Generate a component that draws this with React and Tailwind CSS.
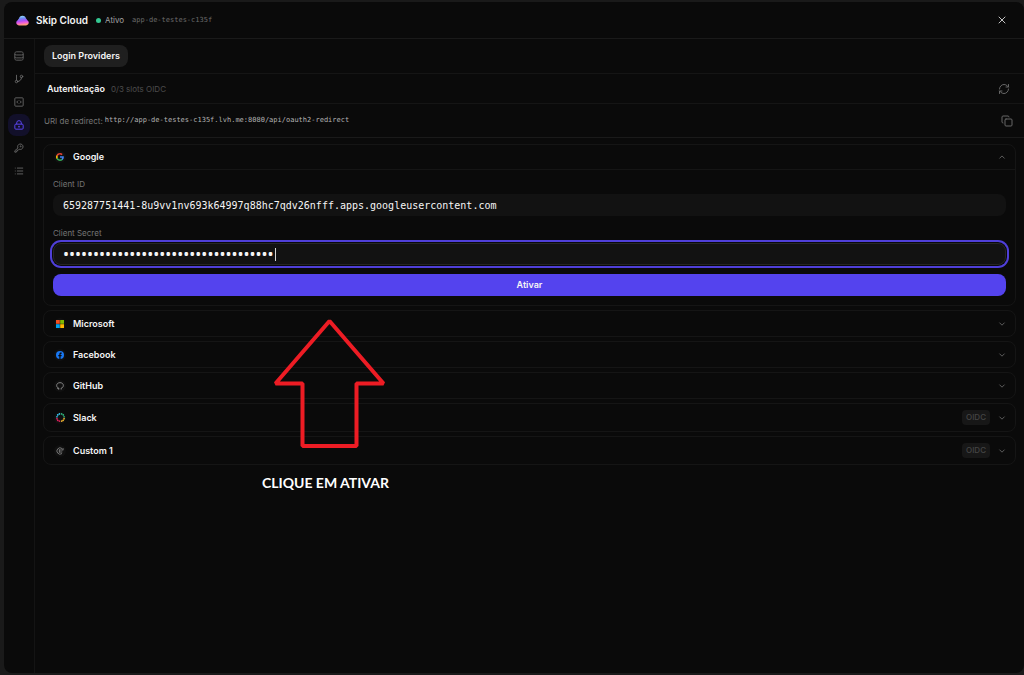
import { GitBranch, List, RefreshCw, X, Copy } from 'lucide-react'

const REDIRECT_URI = 'http://app-de-testes-c135f.lvh.me:8080/api/oauth2-redirect'
const CLIENT_ID = '659287751441-8u9vv1nv693k64997q88hc7qdv26nfff.apps.googleusercontent.com'

function CloudLogo() {
  return (
    <svg viewBox="0 0 24 20" className="h-[11px] w-[13px]" aria-hidden="true">
      <defs>
        <linearGradient id="cloud" x1="0" y1="0" x2="0.15" y2="1">
          <stop offset="0" stopColor="#9af0f5" />
          <stop offset="0.35" stopColor="#6f8cf5" />
          <stop offset="0.6" stopColor="#b04df5" />
          <stop offset="0.8" stopColor="#f25fd8" />
          <stop offset="1" stopColor="#ff9a7a" />
        </linearGradient>
      </defs>
      <path
        d="M12 1c3.600 0 6 2.200 6.500 5.500 1.200.6 1.800 1.600 2 3 1.900.6 3 2.300 3 4.300 0 3-2.100 5.200-4.900 5.200H5.400C2.600 19 .5 16.800.5 13.800c0-2 1.100-3.700 3-4.300.2-1.400.8-2.400 2-3C6 3.200 8.400 1 12 1z"
        fill="url(#cloud)"
      />
    </svg>
  )
}

function DatabaseIcon(props) {
  return (
    <svg viewBox="0 0 24 24" fill="none" stroke="currentColor" strokeWidth="2" aria-hidden="true" {...props}>
      <path d="M2 6c0-2.500 1.500-4 4-4h12c2.500 0 4 1.500 4 4v12c0 2.500-1.500 4-4 4H6c-2.500 0-4-1.500-4-4z" />
      <path d="M2 7c0 1.500 1.500 2.500 4 2.500h12c2.500 0 4-1 4-2.500M2 14c0 1.500 1.500 2.500 4 2.500h12c2.500 0 4-1 4-2.500" />
    </svg>
  )
}

function CodeIcon(props) {
  return (
    <svg viewBox="0 0 24 24" fill="none" stroke="currentColor" strokeWidth="2" aria-hidden="true" {...props}>
      <rect x="2" y="2" width="20" height="20" rx="2" />
      <path d="M10 8.500L6.500 12l3.500 3.500M14 8.500l3.500 3.500-3.500 3.500" />
    </svg>
  )
}

function LockIcon(props) {
  return (
    <svg viewBox="0 0 24 24" fill="none" stroke="currentColor" strokeWidth="2.400" aria-hidden="true" {...props}>
      <rect x="2" y="10" width="20" height="12" rx="2.500" />
      <path d="M6.500 10V7a5.500 5.500 0 0 1 11 0v3" />
      <circle cx="12" cy="16" r="2" fill="currentColor" stroke="none" />
    </svg>
  )
}

function KeyIcon(props) {
  return (
    <svg
      viewBox="0 0 24 24"
      fill="none"
      stroke="currentColor"
      strokeWidth="2"
      strokeLinejoin="round"
      aria-hidden="true"
      {...props}
    >
      <path d="M9.500 12A6.500 6.500 0 1 1 12.500 14.800L10.500 17H8v2.500H5.500V22H2v-3.500z" />
      <circle cx="16" cy="8" r="1.200" />
    </svg>
  )
}

function Chevron({ up }) {
  return (
    <svg
      viewBox="0 0 8 8"
      className="size-2 text-[#5c5c5c]"
      fill="none"
      stroke="currentColor"
      strokeLinecap="round"
      aria-hidden="true"
    >
      <path d={up ? 'M1.700 5.200L4 2.900l2.300 2.300' : 'M1.700 2.900L4 5.200l2.300-2.300'} />
    </svg>
  )
}

function GoogleIcon() {
  return (
    <svg viewBox="0 0 24 24" className="size-2" aria-hidden="true">
      <path fill="#4285F4" d="M23.500 12.300c0-.8-.1-1.600-.2-2.300H12v4.500h6.500c-.3 1.500-1.100 2.700-2.400 3.600v3h3.900c2.200-2.100 3.500-5.100 3.500-8.800z" />
      <path fill="#34A853" d="M12 24c3.200 0 6-1.100 8-2.900l-3.900-3c-1.100.7-2.500 1.200-4.100 1.200-3.100 0-5.800-2.100-6.700-5H1.300v3.100C3.300 21.400 7.300 24 12 24z" />
      <path fill="#FBBC05" d="M5.300 14.300c-.2-.7-.4-1.500-.4-2.300s.1-1.600.4-2.300V6.600h-4C.5 8.200 0 10 0 12s.5 3.800 1.300 5.400z" />
      <path fill="#EA4335" d="M12 4.800c1.800 0 3.300.6 4.600 1.800L20 3.100C18 1.200 15.200 0 12 0 7.300 0 3.300 2.700 1.300 6.600l4 3.100c.9-2.800 3.600-4.900 6.700-4.900z" />
    </svg>
  )
}

function MicrosoftIcon() {
  return (
    <svg viewBox="0 0 8 8" className="size-2" aria-hidden="true">
      <path fill="#F25022" d="M0 0h3.800v3.800H0z" />
      <path fill="#7FBA00" d="M4.200 0H8v3.800H4.200z" />
      <path fill="#00A4EF" d="M0 4.200h3.800V8H0z" />
      <path fill="#FFB900" d="M4.200 4.200H8V8H4.200z" />
    </svg>
  )
}

function FacebookIcon() {
  return (
    <svg viewBox="0 0 24 24" className="size-2" aria-hidden="true">
      <circle cx="12" cy="12" r="12" fill="#1877F2" />
      <path fill="#0a0a0a" d="M10 24v-8.500H7V12h3V9.400C10 6.400 11.800 4.700 14.500 4.700c1.300 0 2.700.2 2.700.2v3h-1.500c-1.500 0-2 .9-2 1.900V12H17l-.5 3.500h-2.800V24z" />
    </svg>
  )
}

function GitHubIcon() {
  return (
    <svg viewBox="0 0 24 24" className="size-2" fill="none" stroke="#9a9a9a" strokeWidth="2.500" aria-hidden="true">
      <path d="M8.500 22.500v-4C4.500 17 2 15 2 10.500 2 5.500 6 2 12 2s10 3.500 10 8.500c0 4.500-2.500 6.500-6.500 8v4" />
      <path d="M8.500 20.500c-2.500.7-3.500-.5-5-2.500" />
    </svg>
  )
}

function SlackIcon() {
  return (
    <svg viewBox="0 0 24 24" className="size-[9px]" fill="none" strokeWidth="4.500" strokeLinecap="round" aria-hidden="true">
      <path stroke="#36C5F0" d="M9 2.500h.1M4.500 5h.1M2.500 10h.1" />
      <path stroke="#2EB67D" d="M15 2.500h.1M19.500 5h.1M21.500 10h.1" />
      <path stroke="#ECB22E" d="M21.500 15h.1M19 19.500h.1M15 21.500h.1" />
      <path stroke="#E01E5A" d="M9 21.500h.1M4.500 19.500h.1M2.500 15h.1" />
    </svg>
  )
}

function CustomIcon() {
  return (
    <svg viewBox="0 0 24 24" className="size-2" fill="none" stroke="#8a8a8a" strokeWidth="2.500" aria-hidden="true">
      <path d="M18 19.500a9.500 9.500 0 1 1 0-15M10 7v10M10 9h12M10 15h9M21 3v6" />
    </svg>
  )
}

const navItems = [
  { label: 'Banco de dados', icon: DatabaseIcon },
  { label: 'Branches', icon: GitBranch },
  { label: 'Funções', icon: CodeIcon },
  { label: 'Autenticação', icon: LockIcon, active: true },
  { label: 'Segredos', icon: KeyIcon },
  { label: 'Logs', icon: List },
]

const providers = [
  { name: 'Microsoft', icon: MicrosoftIcon },
  { name: 'Facebook', icon: FacebookIcon },
  { name: 'GitHub', icon: GitHubIcon },
  { name: 'Slack', icon: SlackIcon, oidc: true },
  { name: 'Custom 1', icon: CustomIcon, oidc: true },
]

function ProviderLabel({ icon: Icon, name }) {
  return (
    <span className="flex items-center gap-[7px]">
      <span className="flex size-3 items-center justify-center rounded-full bg-[#101010]">
        <Icon />
      </span>
      {name}
    </span>
  )
}

function ProviderRow({ provider }) {
  return (
    <button
      className={`flex w-full items-center justify-between rounded-lg border border-[#151515] pr-[9px] pl-[10px] text-left ${
        provider.oidc ? 'h-[29px]' : 'h-[27px]'
      }`}
    >
      <ProviderLabel icon={provider.icon} name={provider.name} />
      <span className="flex items-center gap-2">
        {provider.oidc && (
          <span className="rounded bg-[#171717] px-1 text-[8px] leading-[15px] font-medium text-[#454545]">OIDC</span>
        )}
        <Chevron />
      </span>
    </button>
  )
}

function Annotation() {
  return (
    <div className="pointer-events-none absolute top-[318px] left-[262px] flex flex-col items-center gap-[25px]">
      <svg width="112" height="130" viewBox="0 0 112 130" fill="none" className="ml-2" aria-hidden="true">
        <path d="M55.500 3L109.500 65.500H82.500V128H28.500V65.500H1.500Z" stroke="#ed1c24" strokeWidth="4" strokeLinejoin="bevel" />
      </svg>
      <span className="font-['Lato',sans-serif] text-[14px] leading-5 font-bold whitespace-nowrap text-white">
        CLIQUE EM ATIVAR
      </span>
    </div>
  )
}

export default function App() {
  return (
    <div className="relative flex min-h-screen flex-col bg-[#1a1a1a] pt-[2px] pb-[2px] pl-1 font-['Inter',sans-serif] text-[9px] text-[#f5f5f5]">
      <div className="flex flex-1 flex-col rounded-lg bg-[#0a0a0a]">
        <header className="flex h-[37px] items-center border-b border-[#1a1a1a] pr-4 pl-3">
          <CloudLogo />
          <h1 className="ml-[7px] text-[10px] font-semibold">Skip Cloud</h1>
          <span className="ml-2 size-[5px] rounded-full bg-[#34c892]" />
          <span className="ml-1 text-[8px] text-[#a3a3a3]">Ativo</span>
          <span className="ml-2 font-['DejaVu_Sans_Mono',monospace] text-[7px] text-[#6b6b6b]">app-de-testes-c135f</span>
          <button className="ml-auto text-[#c4c4c4]" aria-label="Fechar">
            <X className="size-3" />
          </button>
        </header>

        <div className="flex flex-1">
          <nav className="flex w-[31px] flex-col items-center gap-px border-r border-[#141414] pt-[6px]">
            {navItems.map(({ label, icon: Icon, active }) => (
              <button
                key={label}
                aria-label={label}
                className={`flex size-[22px] items-center justify-center rounded-lg ${
                  active ? 'bg-[#12102a] text-[#5b45ef]' : 'text-[#707070]'
                }`}
              >
                <Icon className="size-[10px]" />
              </button>
            ))}
          </nav>

          <main className="min-w-0 flex-1">
            <div className="flex h-[35px] items-center border-b border-[#151515] px-[9px]">
              <button className="h-[22px] rounded-lg bg-[#1f1f1f] px-2 font-semibold">Login Providers</button>
            </div>

            <div className="flex h-[30px] items-center border-b border-[#151515] pr-[14px] pl-3">
              <h2 className="font-semibold">Autenticação</h2>
              <span className="ml-[6px] text-[8px] text-[#4d4d4d]">0/3 slots OIDC</span>
              <button className="ml-auto text-[#666666]" aria-label="Atualizar">
                <RefreshCw className="size-3" />
              </button>
            </div>

            <div className="flex h-[34px] items-center border-b border-[#1a1a1a] pr-[11px] pl-[9px]">
              <span className="text-[8px] text-[#757575]">URI de redirect:</span>
              <code className="ml-[2px] font-['DejaVu_Sans_Mono',monospace] text-[7px] text-[#b3b3b3]">{REDIRECT_URI}</code>
              <button className="ml-auto text-[#666666]" aria-label="Copiar">
                <Copy className="size-3" />
              </button>
            </div>

            <div className="flex flex-col gap-1 py-[6px] pr-2 pl-2 font-semibold">
              <section className="rounded-lg border border-[#151515]">
                <button className="flex h-[25px] w-full items-center justify-between border-b border-[#151515] pr-[9px] pl-[10px]">
                  <ProviderLabel icon={GoogleIcon} name="Google" />
                  <Chevron up />
                </button>
                <form className="flex flex-col px-[9px] pt-2 pb-[9px]" onSubmit={(e) => e.preventDefault()}>
                  <label htmlFor="client-id" className="text-[8px] leading-3 font-normal text-[#757575]">
                    Client ID
                  </label>
                  <input
                    id="client-id"
                    type="text"
                    defaultValue={CLIENT_ID}
                    className="mt-1 h-[22px] rounded-lg bg-[#121212] px-[10px] font-['DejaVu_Sans_Mono',monospace] text-[10px] font-normal outline-none"
                  />
                  <label htmlFor="client-secret" className="mt-[11px] text-[8px] leading-3 font-normal text-[#757575]">
                    Client Secret
                  </label>
                  <div className="relative mt-1 flex">
                    <input
                      id="client-secret"
                      type="password"
                      defaultValue="GOCSPX-0000000000000000000000000000"
                      className="h-[22px] flex-1 rounded-lg border border-[#262626] bg-[#121212] px-[9px] font-['Noto_Sans',sans-serif] text-[16px] leading-4 font-normal ring-2 ring-[#4f3fd8] ring-offset-1 ring-offset-[#0a0a0a] outline-none"
                    />
                    <span className="absolute top-[5px] left-[222px] h-[13px] w-px bg-[#d4d4d4]" />
                  </div>
                  <button type="submit" className="mt-[9px] h-[22px] rounded-lg bg-[#5443ee] font-semibold">
                    Ativar
                  </button>
                </form>
              </section>

              {providers.map((provider) => (
                <ProviderRow key={provider.name} provider={provider} />
              ))}
            </div>
          </main>
        </div>
      </div>
      <Annotation />
    </div>
  )
}
